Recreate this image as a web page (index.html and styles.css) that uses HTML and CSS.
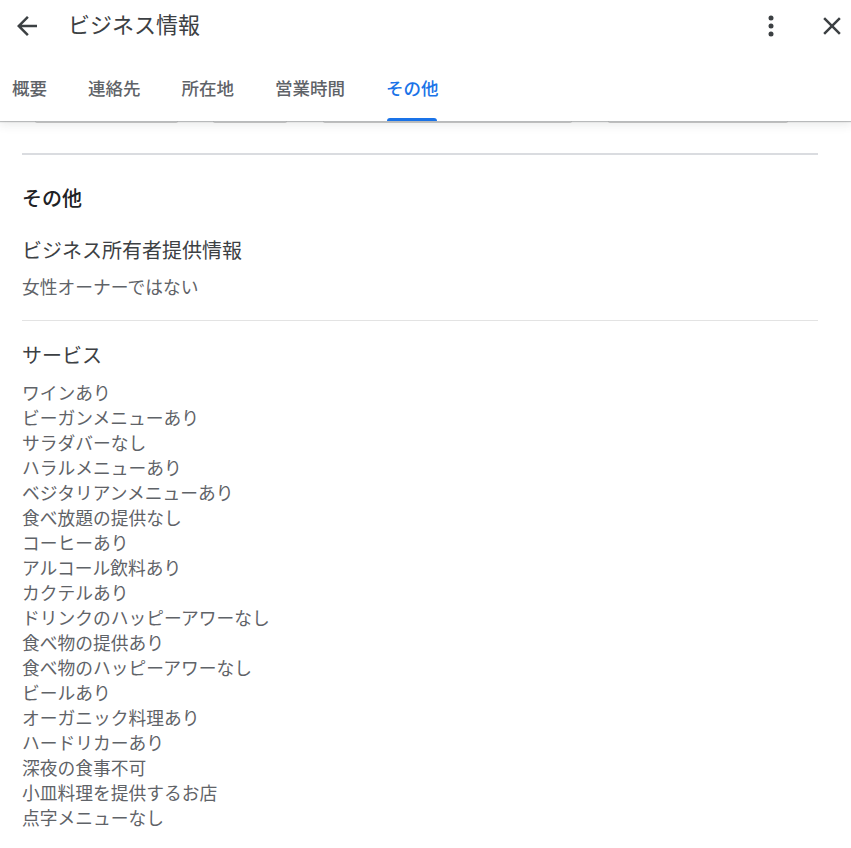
FILE: index.html
```html
<!DOCTYPE html>
<html lang="ja">
<head>
    <meta charset="UTF-8">
    <meta name="viewport" content="width=device-width, initial-scale=1.0">
    <title>ビジネス情報</title>
    <link rel="stylesheet" href="styles.css">
</head>
<body>
    <header class="top">
        <div class="app-bar">
            <button class="icon-btn back" aria-label="戻る">
                <svg viewBox="0 0 24 24" width="30" height="30"><path d="M20 11H7.83l5.59-5.59L12 4l-8 8 8 8 1.41-1.41L7.83 13H20v-2z"/></svg>
            </button>
            <h1 class="title">ビジネス情報</h1>
            <div class="actions">
                <button class="icon-btn" aria-label="その他のオプション">
                    <svg viewBox="0 0 24 24" width="30" height="30"><circle cx="12" cy="5.6" r="2"/><circle cx="12" cy="12" r="2"/><circle cx="12" cy="18.4" r="2"/></svg>
                </button>
                <button class="icon-btn" aria-label="閉じる">
                    <svg viewBox="0 0 24 24" width="30" height="30"><path d="M19 6.41L17.59 5 12 10.59 6.41 5 5 6.41 10.59 12 5 17.59 6.41 19 12 13.41 17.59 19 19 17.59 13.41 12z"/></svg>
                </button>
            </div>
        </div>
        <nav class="tabs">
            <a class="tab">概要</a>
            <a class="tab">連絡先</a>
            <a class="tab">所在地</a>
            <a class="tab">営業時間</a>
            <a class="tab active">その他</a>
        </nav>
    </header>

    <div class="peek">
        <span class="chip c1"></span>
        <span class="chip c2"></span>
        <span class="chip c3"></span>
        <span class="chip c4"></span>
    </div>

    <main class="content">
        <hr class="divider thick">

        <h2 class="section-title">その他</h2>

        <h3 class="group-title first">ビジネス所有者提供情報</h3>
        <p class="item">女性オーナーではない</p>

        <hr class="divider">

        <h3 class="group-title">サービス</h3>
        <ul class="items">
            <li>ワインあり</li>
            <li>ビーガンメニューあり</li>
            <li>サラダバーなし</li>
            <li>ハラルメニューあり</li>
            <li>ベジタリアンメニューあり</li>
            <li>食べ放題の提供なし</li>
            <li>コーヒーあり</li>
            <li>アルコール飲料あり</li>
            <li>カクテルあり</li>
            <li>ドリンクのハッピーアワーなし</li>
            <li>食べ物の提供あり</li>
            <li>食べ物のハッピーアワーなし</li>
            <li>ビールあり</li>
            <li>オーガニック料理あり</li>
            <li>ハードリカーあり</li>
            <li>深夜の食事不可</li>
            <li>小皿料理を提供するお店</li>
            <li>点字メニューなし</li>
        </ul>
    </main>
</body>
</html>
```

FILE: styles.css
```css
body {
    margin: 0;
    background: #fff;
    font-family: Roboto, "Noto Sans CJK JP", sans-serif;
    color: #202124;
    overflow: hidden;
}

.top {
    position: relative;
    z-index: 2;
    background: #fff;
    box-shadow: 0 1px 1px rgba(60, 64, 67, 0.3), 0 2px 10px 1px rgba(60, 64, 67, 0.12);
}

.app-bar {
    height: 52px;
    display: flex;
    align-items: center;
    padding: 0 4px 0 12px;
}

.icon-btn {
    width: 30px;
    height: 30px;
    padding: 0;
    border: none;
    background: none;
    fill: #3c4043;
    cursor: pointer;
    display: flex;
}

.title {
    margin: 0 0 0 26px;
    font-size: 22px;
    font-weight: 400;
    color: #3c4043;
    line-height: 28px;
    flex: 1;
}

.actions {
    display: flex;
    gap: 31px;
}

.tabs {
    height: 69px;
    display: flex;
    gap: 41px;
    padding-left: 12px;
}

.tab {
    position: relative;
    padding-top: 24px;
    font-size: 17.5px;
    line-height: 26px;
    font-weight: 500;
    color: #5f6368;
    cursor: pointer;
}

.tab.active {
    color: #1a73e8;
}

.tab.active::after {
    content: "";
    position: absolute;
    left: 1px;
    right: 2px;
    bottom: 0;
    height: 3px;
    background: #1a73e8;
    border-radius: 3px 3px 0 0;
}

.peek {
    height: 2px;
    position: relative;
    z-index: 1;
    display: flex;
}

.chip {
    height: 1px;
    border-bottom: 1px solid #d2d2d2;
    border-radius: 0 0 12px 12px;
}

.c1 { margin-left: 35px; width: 143px; }
.c2 { margin-left: 35px; width: 74px; }
.c3 { margin-left: 36px; width: 249px; }
.c4 { margin-left: 36px; width: 180px; }

.content {
    padding: 0 33px 0 22px;
}

.divider {
    margin: 0;
    border: none;
    height: 1px;
    background: #e3e3e3;
}

.divider.thick {
    margin-top: 30px;
    height: 2px;
    background: #dadce0;
}

.section-title {
    margin: 31px 0 0;
    font-size: 20px;
    line-height: 26px;
    font-weight: 500;
    color: #202124;
}

.group-title {
    margin: 22px 0 0;
    font-size: 20px;
    line-height: 26px;
    font-weight: 400;
    color: #3c4043;
}

.group-title.first {
    margin-top: 26px;
}

.item {
    margin: 12px 0 19px;
    font-size: 17.75px;
    line-height: 25px;
    color: #5f6368;
}

.items {
    list-style: none;
    margin: 13px 0 0;
    padding: 0;
}

.items li {
    font-size: 17.75px;
    line-height: 25px;
    color: #5f6368;
}
```
